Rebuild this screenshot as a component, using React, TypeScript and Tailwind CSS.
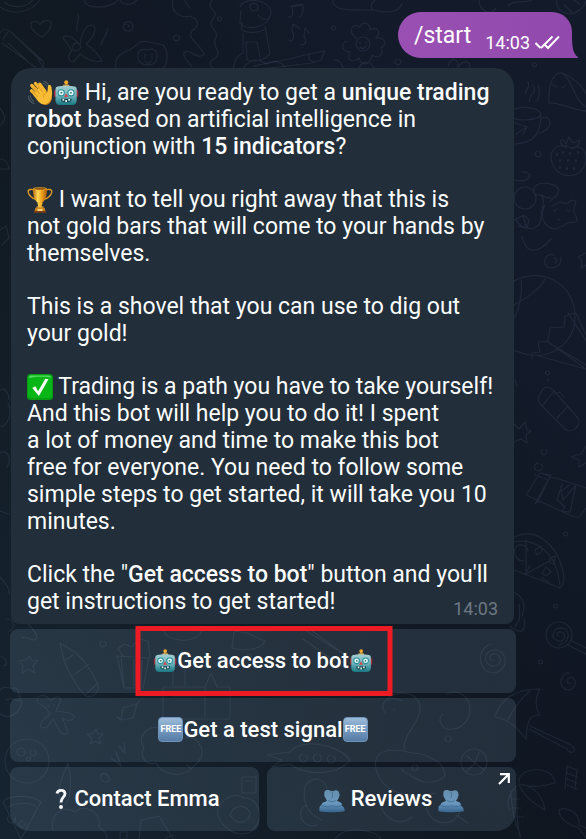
import type { ReactNode } from "react";

const emojiClass = "inline-block align-[-6px]";

function Wave() {
  return (
    <svg viewBox="0 0 26 26" className={`h-[26px] w-[26px] ${emojiClass}`} role="img" aria-label="waving hand">
      <g fill="none" stroke="#4c5961" strokeWidth="1.1" strokeLinecap="round">
        <path d="M1.500 16c0 3 2 6.300 5.500 7.800M3.200 15.500c.3 2.500 1.300 4.300 3.200 5.700M17 1.500c2.300.5 4 2 4.800 4.300M16 3.200c1.700.3 2.800 1.200 3.600 2.800" />
      </g>
      <g fill="none" stroke="#f5b52e" strokeWidth="3.300" strokeLinecap="round">
        <path d="M13.500 14.500 4.800 5.500" />
        <path d="M16 12.500 8.500 3.500" />
        <path d="M18 11.500 12.800 4.200" />
        <path d="M11 17 4.500 10.800" />
      </g>
      <path d="M6 14.500 12.500 8l7.500 4.500c.9-2 .6-4 .9-6.200.4-2 3-1.800 3.400.2.6 3.500 1.400 7.500.4 11.500-1.200 4.800-5 7.300-9 6.300-4-1-7-6.300-9.700-9.800Z" fill="#f9bd35" />
      <path d="M24.800 14c.2 6-3.800 10.600-8.800 10.300 4.500 2.300 10.200-2.300 8.800-10.300Z" fill="#d9861c" />
      <path d="m6.800 7.500 6 6.200M10.500 5.800l5 6M5.600 12l5 4.700M19.600 12.600c-2 .4-3.600 2-3.200 4.400" fill="none" stroke="#d48a1c" strokeWidth=".8" strokeLinecap="round" />
    </svg>
  );
}

function Robot({ small = false }: { small?: boolean }) {
  return (
    <svg
      viewBox="0 0 26 26"
      className={small ? "inline-block h-6 w-6 align-[-5px]" : `h-[26px] w-[26px] ${emojiClass}`}
      role="img"
      aria-label="robot"
    >
      <defs>
        <linearGradient id="robotHead" x1="0" y1="0" x2="0" y2="1">
          <stop offset="0" stopColor="#a5cdd1" />
          <stop offset=".5" stopColor="#72b5bd" />
          <stop offset="1" stopColor="#177782" />
        </linearGradient>
      </defs>
      <path d="M12 3h2.500v4H12Z" fill="#94783f" />
      <circle cx="13.200" cy="2.300" r="2" fill="#f2a92e" />
      <path d="M10.200 4.600h6v2h-6Z" fill="#caa44f" />
      <rect x="1" y="10" width="2" height="7" rx="1" fill="#a52c3a" />
      <rect x="23.200" y="10" width="2" height="7" rx="1" fill="#a52c3a" />
      <path d="M4.500 6.500c5-1 12.200-1 17.200 0 1.600.4 2 1.500 2 3v11c0 2.500-1.700 4.500-4.200 4.500H6.700c-2.500 0-4.200-2-4.200-4.500v-11c0-1.500.4-2.600 2-3Z" fill="url(#robotHead)" />
      <circle cx="8.200" cy="12.800" r="3.600" fill="#278e98" />
      <circle cx="18" cy="12.800" r="3.600" fill="#278e98" />
      <circle cx="8.200" cy="12.800" r="2.500" fill="#e5ffff" />
      <circle cx="18" cy="12.800" r="2.500" fill="#e5ffff" />
      <circle cx="8.400" cy="12.800" r="1" fill="#3c737a" />
      <circle cx="17.800" cy="12.800" r="1" fill="#3c737a" />
      <path d="M13.100 13.300 15.300 17h-4.400Z" fill="#d24848" />
      <path d="M8 18.800h10.500c.4 2.300-1 3.500-2.700 3.500h-5.200c-1.800 0-3-1.200-2.600-3.500Z" fill="#174e57" />
      <path d="M9.500 19h1.700v1.800H9.500ZM12.300 20h1.700v2h-1.700ZM15.300 19H17v1.800h-1.700Z" fill="#e7f4f4" />
    </svg>
  );
}

function Trophy() {
  return (
    <svg viewBox="0 0 26 26" className={`h-[26px] w-[26px] ${emojiClass}`} role="img" aria-label="trophy">
      <defs>
        <linearGradient id="cup" x1="0" y1="0" x2="1" y2="0">
          <stop offset="0" stopColor="#b96b0b" />
          <stop offset=".35" stopColor="#ffda58" />
          <stop offset=".6" stopColor="#efa51f" />
          <stop offset="1" stopColor="#a85a06" />
        </linearGradient>
      </defs>
      <path d="M7 3.200C4 1.500.8 2.500 1.200 5c.5 3.200 3.700 6.600 8 7.500M19 3.200c3-1.700 6.200-.7 5.800 1.800-.5 3.200-3.700 6.600-8 7.500" fill="none" stroke="#dc9a25" strokeWidth="1.400" />
      <path d="M6 1.500h14c.2 6-1.200 11.800-4.600 14l-.8 5h-3.200l-.8-5C7.200 13.300 5.800 7.500 6 1.500Z" fill="url(#cup)" />
      <ellipse cx="13" cy="1.800" rx="7" ry="1.200" fill="#8d4b06" stroke="#f6bf3c" strokeWidth=".6" />
      <path d="M10.500 16h5v1.200h-5ZM9.500 19.500h7v1.300h-7Z" fill="#f3b535" />
      <path d="M8.500 20.800h9l1 3.500h-11Z" fill="#d18619" />
      <path d="M7 23.800h12v2H7Z" fill="#7b3d13" />
      <path d="M10.500 22h5v2h-5Z" fill="#f7d07a" />
    </svg>
  );
}

function CheckMark() {
  return (
    <svg viewBox="0 0 26 26" className={`h-[26px] w-[26px] ${emojiClass}`} role="img" aria-label="check mark">
      <rect width="26" height="26" rx="3.500" fill="#079c14" />
      <rect x="1" y="1" width="24" height="23" rx="3" fill="#08b717" />
      <path d="M3.500 1.500h18c1.500 0 2.500 1 2.500 2-5-1-15-1-22 .5 0-1.500.5-2.500 1.500-2.500Z" fill="#55d962" />
      <path d="m5.300 14 3-1.700 2.800 5L18.300 4.800l3.200.5L11.900 22Z" fill="#fff" />
    </svg>
  );
}

function Free() {
  return (
    <span className="inline-flex h-[25px] w-[25px] items-center justify-center rounded-[4px] border border-[#6f95bd] bg-linear-to-b from-[#9bbbd9] to-[#557ba5] align-[-5px] text-[9px] leading-none font-bold text-white">
      FREE
    </span>
  );
}

function People() {
  return (
    <svg viewBox="0 0 26 24" className="mt-1 h-6 w-[26px]" aria-hidden="true">
      <defs>
        <linearGradient id="people" x1="0" y1="0" x2="0" y2="1">
          <stop offset="0" stopColor="#668fae" />
          <stop offset=".6" stopColor="#6a98be" />
          <stop offset="1" stopColor="#38658f" />
        </linearGradient>
      </defs>
      <path d="M5.500 5C4.800 2.300 6.500 1 8.500 1c1.500 0 2.700.3 3.500 1.200.6-.7 1.400-.7 2 0C17 .3 20.500 1.500 20.300 5c.6.700.5 2-.3 2.800-.4 1.800-1 2.700-2 3.600.2 1 3.900 1.300 4.600 3.200.5 1 .4 1.800.2 2.300 1.600.4 2.900 1.600 3 5.100-3 1.500-18.500 1.500-25.300.2C.1 19 .4 16.600 2.500 16c.3-3.300 5.200-2.900 5.500-4.700-.8-.8-1.300-1.600-1.600-2.900C5.300 7.700 5 6 5.500 5Z" fill="url(#people)" />
      <path d="M13 3c.8 1.600.7 4-.2 6.200M3 16.500c4 1.500 8 2 10 .3 3 1.300 6.500 1.200 10-.5M9 11.500c2 1.500 6 1.500 8 0" fill="none" stroke="#3e6b92" strokeWidth=".8" />
    </svg>
  );
}

function Doodles() {
  return (
    <svg
      viewBox="0 0 586 839"
      preserveAspectRatio="xMidYMin slice"
      className="pointer-events-none absolute inset-0 h-full w-full"
      fill="none"
      stroke="#93a5c6"
      strokeOpacity=".11"
      strokeWidth="1.200"
      strokeLinecap="round"
      strokeLinejoin="round"
      aria-hidden="true"
    >
      {/* top strip */}
      <path d="M0 7c12 8 30 7 40-7M4 2c8 6 20 7 29-2M84 0c3 10 25 9 34 0M120 0c1 5 12 6 17 0" />
      <path d="M0 33c3-5 8-4 11-1l31 28c4 5 1 8-4 9L2 43M8 32 3 39M14 35l27 26M8 43l26 24M38 60l8 10" />
      <path d="M42 37c-8-4-12-9-11-14 3-3 7-2 9 2 2-5 8-5 11-3 1 7-4 11-9 15Z" />
      <path d="M78 14c2 8-3 10-1 17M108 29c-3 9-6 10-7 16M75 40c-5-5-11-5-12-2 3 3 6 8 9 13-5 4-4 9 0 11 4-1 5-5 8-8 7 5 13 9 22 7-3-6-9-12-16-17 8-7 13-18 5-19-8 1-10 13-11 20-5-5-8 0-7 5 4 2 9-1 7-5Z" />
      <path d="M124 23c5-3 9-1 9 4s-8 6-10 0c1-4 6-4 6 0M176 35a3 3 0 1 0 1 0M116 68c-2-10 4-15 13-18 8-3 9-11 20-8l14 3c5 6 6 17 0 23" />
      <path d="M148 50c8-4 11 4 8 11-4 6-15 5-18-2-2-7 4-12 10-9Zm-3 4v4m7-4v4m-7 3c3 4 6 1 6 0" />
      <path d="M173 0c-3 12 8 19 17 16 11 4 8 11 2 15-6 8 10 15 12 23-4 6-12-2-17-3-8 3 1 10 5 16M184 0l6 8M212 0c-7 11 9 9 1 19-8 9 8 10 2 21-3 8 9 12-1 19-9 6 0 9 1 10M219 17a2 2 0 1 0 1 0" />
      <path d="M240 7c3-11 31-8 31 6-1 8-9 8-13 2m-8-10c4-4 9-1 8 4-4 4-9 1-8-4Zm-9 5-1 13c6 8 23 5 29-4m-27 4-1 6c6 5 17 4 25 0m-23 4v20c-8 4-8 8-10 16m32-43 5 28c-6 7-16 8-23 6l-1-18h11l3 16m-20 14c9-13 17-15 26-8 10-6 17 0 19 3" />
      <path d="M288 17c5 2 6-6 3-11l11-2c3 5 0 11-2 13m-9-10 11-2M289 40c4 3 6-3 3-10l1-6 7 5m0 16c6 0 7-3 4-9l1-8 4 5M333 26a2 2 0 1 0 1 0" />
      <path d="m253 66 36-7 20-5 16-3-4 9-9 3-51 6M309 54c-1 6 2 8 5 8" />
      <g>
        <circle cx="363" cy="44" r="7" />
        <path d="M357 39c-10-8-5-17 3-12 1-6 10-5 10 3 8-4 11 2 6 8 9-1 12 7 5 10 4 8-4 11-9 7-1 9-10 13-13 3-7 6-13 2-9-6-9 0-9-10-3-11M360 42v2m6-2v2m-6 3c3 3 5 1 6-1M334 60c5-1 9 5 9 9m16 0c3-10 13-8 15 0" />
      </g>
      <path d="M333 0c-1 8 9 10 21 10h19c15 4 27 2 29-7M375 0c-4 3-5 7-2 10M479 0c1 12 12 16 17 8M508 6c5-7 17-2 24-6M557 0c-2 12 13 18 22 10 8-5 6-10 7-10M564 5l8 7M574 0l6 4" />
      {/* behind the right edge of the message */}
      <path d="M397 59a3 3 0 1 0 2 0M448 66c3-11 11-6 10 1 6-8 14-6 11 1M534 63a2 2 0 1 0 1 0M526 94c-3-3 5-5 2-12m2 20c-4-6 9-9 3-17m4 16c5-9 1-13 1-16M514 109c12-4 27 0 27 6-5 6-22 6-27 3m27-2c-1 17-6 27-26 28m27-26c9-5 13 12-3 15M515 123l12 4-11 7m11-7-4 7" />
      <path d="M549 103c-1-19 5-32 13-30 10 4 19 10 24 21M549 103c10-1 30 9 37 8M562 73c12 8 11 26 24 34M553 85l4 2m8-1-3 2M537 151a3 3 0 1 0 2 0" />
      <path d="M552 152c5-9 16-7 20-3 8-6 17 2 13 15-5 15-23 15-31 3-3-5-4-10-2-15Zm14-4c-4-3-9-8-3-8l3 4 3-7 4 6 6-3c2 4-3 8-8 8" />
      <path d="M557 154v1m6-3v1m7 0v1m8-2v1m-18 7v1m8-1v1m8-1v1m-16 6v1m7 0v1m7-1v1" strokeWidth="2" />
      <circle cx="525" cy="198" r="11" />
      <path d="M514 180c18 4 20-9 8-8m14 23c7-2 8 4 7 11-4 13 1 17-9 22-10 2-15-3-18-8m18-30c-2-8 20-10 25 0 0 7-7 7-9 12m-8-7c3 3 5 3 9 3m1 8 8-4c5 2 8 2 12-2l4 1-3 10c3 3 4 6 4 11l-9 1c-12 8-19 8-25-3-2-6-1-10 2-15M514 220l10-5 5 5-2 8-9-2m5-11 3 12m-4 9c4 20 17 17 29 3M554 211l3-2m1 10 2 1m7-10 3 1" />
      <path d="M554 255c-8-2-10 4-9 9 2 6 17 6 16-7m-7 1c3 0 4 3 1 5m23-6 8-4m-8 4 4 4-1 7 5-3" />
      <path d="M514 281c25-14 61 0 61 36 0 25-23 41-43 38-8 0-15-5-18-4M521 280c2 15-3 32-7 38m31-39c-7 13-21 20-31 26m61 8-10 3-1 11-14 1-2 13-10 1 2 10-8 1v6m36-46 30 46M547 341l39 28m-40-28 40 24M576 313l10 22M535 355l51 14M547 371a2 2 0 1 0 1 0M548 379v2m-33-1 2 6" />
      <path d="M542 391c2-5 8-5 12 0l23 26c6 7-4 17-11 13l-23-23c-7-6-5-12-1-16Zm12 0-12 15m26 0-11 12m-3-24 6-2 4 5M514 424l5 5 6-7 2 8 4 1-5 4 1 8-6-4-7 3M543 449a3 3 0 1 0 2 0M538 463a4 4 0 1 0 3 1M586 446l-5 8-10 3 8 3v7l7-4" />
      <path d="m526 495 14-22 46 15M526 495l48 22c7 2 8-4 12-9M535 475l13 5-13 24m5-31 11 2-14 28M562 484l-5 16 8 7-3 4 8 1 6-27-13 15-2-9 9-6" />
      <path d="M514 537c22-10 42 7 48 31 5 14-1 22-4 19l-44-17m0-28c23-5 40 13 44 32l2 11m-34-46v35l25-14m-26 14 5-8m-16-13c1-13 14-8 14-2m-14 2c2 6 6 8 10 8M535 550l6-4 1 5-5 4Zm14 9 6-3-1 8-4-1Zm-7 14 4-6 5 5-5 4Zm-1 5 8 4M565 532a2 2 0 1 0 1 0" />
      <path d="M514 592c10 6 12 13 8 24M555 604a2 2 0 1 0 1 0M510 626c9 8 17 8 14-8m-9 8c6-5 5-13 4-22" />
      {/* right column beside the buttons */}
      <circle cx="559" cy="635" r="13" />
      <path d="M559 636c-3 0-3-5 2-4 6 2 4 10-3 9-8-2-6-14 4-13 9 2 8 15-3 17M568 645l18 9m-14-13 14 7M540 660a2 2 0 1 0 1 0M570 683c-5 2-3-8 3-5 6 5-1 15-8 11-8-6-2-17 4-16" />
      <path d="M500 706c8-12 22-17 40-17-5 9-5 18 0 26-10 0-13 4-14 24-10-13-18-20-32-22l6-11Zm30-15c-13 11-16 18-23 30m23 5 41 19c8 6-1 11-4 4l-38-20" />
      <path d="M519 782c-2-15 35-18 36 1-10 3-25 5-36 1 9 1 23 6 26 26-7-5-17-8-26-25m-2 1c-9 8-11 18-7 24m7-21c-1 12 0 35 3 48m-9-46c0 14 4 32 10 46m-9-38h8m-7 9h8m-6 9h9M567 766l10 4m-10 3 10 4m-10 2 10 4m-10 2 10 4M567 766l-2 23m12-20-2 20M586 838l-8-11c-8 0-20-10-19-17 8-4 21 3 20 15l7 3" />
      {/* behind the keyboard */}
      <path d="M0 108c6 8 6 13 0 17m0 34c5 0 8 3 9 10H0M0 230l6-4 3 12-7 7M0 390c7-3 9 6 9 10m-9 27c9-1 12-15 8-24m-8 50c8-5 12 7 7 14M0 511l9 3m-9 63c7 8 10 12 9 17" />
      <path d="M7 619c8 0 8 10 2 12m12-15c10 12 21 21 13 24-6 0-8-5-12-2M29 656l3 5 6-1-5 6 2 7-7-4-6 4 1-7-4-5 7-1ZM60 643l4 18c5 13 15 29 22 35 5 2 12-1 12-10-3-10-15-29-25-35Zm4 18 9-6m13 39 12-11m-9-19-14 10M0 656c7 2 9 9 3 10" />
      <path d="M117 656l7 32h19l6-30Zm6 0-5-7 6-5 8 3 7-8 9 2 2 16m-16 2v27m8-26-1 25m-20-28 3 29M102 641a3 3 0 1 0 2 0" />
      <path d="M163 628c1 12 22 16 35 8 4-3 4-7 4-8m32 3-2 17c14 4 30 1 33-7l-18-8Zm15 23a2 2 0 1 0 1 0M305 630l45 28c7 5-1 13-7 9l-40-28m9-8 38 27" />
      <path d="M0 690c5-6 9 0 16-2 5 3 1 9 6 14-3 13-14 18-22 12M6 700c5-3 9 0 15 1M38 703c-5-7 6-11 13-2 5-7 14-4 8 3l-3 7 14 2c7 2 4 9-4 7l-4-2 5 11c2 8-5 6-8 1l-6-11-6 8c-8 3-8-2-4-7l7-6-4-6Zm10 2 1 2m5-3v2" />
      <path d="m123 708 14-4-4 14-12 2Zm-2 12-4-3m20-13 2-3M96 729l2 5h5l-4 4 2 6-6-3-5 3 2-6-5-4h6ZM103 781c-6-4 0-11 5-5 5 5-4 9-7 3m10-21 10 8-5-14m3-6 6 7-1-10" />
      <circle cx="27" cy="761" r="22" />
      <circle cx="21" cy="752" r="4" />
      <path d="M32 750a3 3 0 1 0 2 0M28 757a2 2 0 1 0 1 0" />
      <path d="M163 719h67v-32h-13l-6-14-6 14h-42Zm10-32v-21h12v21m-6-21v-9m26 31v29m-32-21h32M144 748c-10-14 10-27 20-17 7-10 26-3 22 7 15-3 22 18 9 27-11 15-34 10-39-2-12 3-16-8-12-15m43 17 4 4 5-5" />
      <path d="M61 805c-6-15 3-32 7-42 3 15 5 32-3 42m-62-3c4-7 28-8 38 0l-20 37L3 802Zm5 5c7-4 20-5 28-1m-25 9a4 4 0 1 0 4 2m8 4a3 3 0 1 0 2 2M53 830c-3-18 11-25 22-18 10-9 27 0 24 15 7 4 8 9 8 12m34-19 18-4 14 23m-32-19-2 19m26-1 9-3M120 832h7v7h-7Z" />
      <path d="M219 818c-7-12 13-29 25-20 15 0 20 19 11 29-7 12-24 6-29 0-3-1-5-5-7-9Zm11-3c3-10 16-12 20-2 0 9-12 14-20 2Zm12-38h14v16h-14Zm3 4h8" />
      {/* rubber duck, fish and palm */}
      <path d="M386 700c10-12 36-8 34 10-2 16-17 23-16 41 8 3 15 1 23 5 9 4 18 9 18 20-8 8-21 8-30 2-8-4-14-8-13-9m-15-18c-13 2-14 14-8 26 8 16 32 23 57 16m-49-43 17 1m-2-50c-5-3-13-3-16-1-5 5-4 9 0 14m8-5v1M447 694c12-6 22 3 23 14 0 12-8 21-18 21-9 2-16-9-9-15" />
      <circle cx="474" cy="762" r="13" />
      <path d="m467 756 8 7 4-11m-4 11 9 7m-9-7-8 8M447 736a3 3 0 1 0 2 0M414 765a3 3 0 1 0 2 0M290 752c11-14 47-9 60 8-12 16-45 16-60 4l-18 3 10-7-15-5Zm13 2a4 4 0 1 0 3 1m11-1a4 4 0 1 0 3 1m11 0a4 4 0 1 0 3 1M493 660c-5 1-4-7 2-6 9 2 6 13-3 12-11-3-7-18 5-16 12 3 11 21-3 23-16 0-19-24-3-29" />
      <path d="M305 786c8-11 20-8 22 3m-22-3c-3 16 2 28 17 34m-15-15c-12 4-6 25 10 20m63-26c1 19 18 29 32 18m14-14c0 22 28 27 34 8-8 2-10-8-18-3m-107 31c9-13 38-11 46 0m75-24 12 8" />
    </svg>
  );
}

function KeyButton({ children, className = "" }: { children: ReactNode; className?: string }) {
  return (
    <button
      type="button"
      className={`relative flex h-16 w-full min-w-0 items-center justify-center rounded-lg bg-[#8ba8c0]/17 pb-px text-[22px] leading-[27px] font-medium whitespace-nowrap text-white ${className}`}
    >
      {children}
    </button>
  );
}

export default function App() {
  return (
    <div className="relative min-h-screen overflow-hidden bg-linear-to-t from-[#162431] to-[#10181f] font-[Roboto,sans-serif]">
      <div className="absolute inset-0 bg-linear-to-r from-transparent to-[#0e151e]" />
      <div className="absolute inset-0 bg-linear-to-bl from-[#131a2a] from-20% to-transparent to-60%" />
      <Doodles />
      <main className="relative flex flex-col pt-3 pl-[10px]">
        <div className="relative mr-[14px] flex h-[46px] items-center self-end rounded-l-[23px] rounded-tr-[20px] bg-linear-to-r from-[#9950b2] to-[#9149ad] pr-3 pl-4 text-white">
          <span className="text-[23px] leading-[27px]">/start</span>
          <time className="mt-4 ml-[14px] text-[18px] leading-5">14:03</time>
          <svg viewBox="0 0 26 16" className="mt-4 ml-1 h-4 w-[26px]" fill="none" stroke="#fff" strokeWidth="2" aria-label="read">
            <path d="m1.500 8 5 5M7 13 18.500 1.500M11 10l3 3L25 1.500" />
          </svg>
          <svg viewBox="0 0 8 22" className="absolute -right-[6px] bottom-0 h-[22px] w-2" fill="#9149ad" aria-hidden="true">
            <path d="M0 0h2c0 10 1 18 6 21v1H0Z" />
          </svg>
        </div>

        <article className="relative mt-[10px] mr-[72px] ml-px rounded-t-[20px] rounded-b-lg bg-[#222e39] px-4 pt-[11px] pb-[9px] text-[23px] leading-[27px] whitespace-nowrap text-[#fafcfd]">
          <div className="flex flex-col gap-[26px]">
            <p>
              <Wave />
              <Robot /> Hi, are you ready to get a <b className="font-medium">unique trading</b>
              <br />
              <b className="font-medium">robot</b> based on artificial intelligence in
              <br />
              conjunction with <b className="font-medium">15 indicators</b>?
            </p>
            <p>
              <Trophy /> I want to tell you right away that this is
              <br />
              not gold bars that will come to your hands by
              <br />
              themselves.
            </p>
            <p>
              This is a shovel that you can use to dig out
              <br />
              your gold!
            </p>
            <p>
              <CheckMark /> Trading is a path you have to take yourself!
              <br />
              And this bot will help you to do it! I spent
              <br />
              a lot of money and time to make this bot
              <br />
              free for everyone. You need to follow some
              <br />
              simple steps to get started, it will take you 10
              <br />
              minutes.
            </p>
            <p>
              Click the "<b className="font-medium">Get access to bot</b>" button and you'll
              <br />
              get instructions to get started!
            </p>
          </div>
          <time className="absolute right-4 bottom-[5px] text-[18px] leading-5 text-[#6d7883]">14:03</time>
        </article>

        <div className="mt-[5px] mr-[70px] grid grid-cols-2 gap-x-2 gap-y-[5px]">
          <div className="col-span-2">
            <KeyButton>
              <Robot small />
              Get access to bot
              <Robot small />
              <span className="absolute -inset-y-[3px] left-1/2 ml-px w-[257px] -translate-x-1/2 border-[5px] border-[#ed1c24]" />
            </KeyButton>
          </div>
          <div className="col-span-2">
            <KeyButton>
              <Free />
              Get a test signal
              <Free />
            </KeyButton>
          </div>
          <KeyButton className="rounded-bl-[20px] pl-[6px]">
            <svg viewBox="0 0 12 22" className="mr-[7px] h-[22px] w-3" fill="none" aria-hidden="true">
              <path d="M2 5.500C2.500 1.500 9.500 1 10 5.500c.2 3.500-4 4-4 9" stroke="#f4f6f7" strokeWidth="2.800" />
              <circle cx="6" cy="19" r="2" fill="#f4f6f7" />
            </svg>
            Contact Emma
          </KeyButton>
          <KeyButton className="gap-[6px] rounded-br-[20px]">
            <People />
            Reviews
            <People />
            <svg viewBox="0 0 12 12" className="absolute top-[6px] right-[6px] h-3 w-3" fill="none" stroke="#fff" strokeWidth="2.200" aria-hidden="true">
              <path d="M2 1.200h8.800V10M10.500 1.500 1 11" />
            </svg>
          </KeyButton>
        </div>
      </main>
    </div>
  );
}
